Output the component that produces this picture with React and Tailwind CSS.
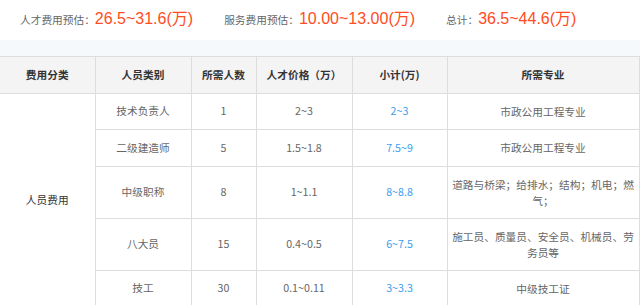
import React from "react"

const font = { fontFamily: '"Noto Sans CJK SC", "Liberation Sans", sans-serif' }
const numFont = { fontFamily: '"Liberation Sans", "Noto Sans CJK SC", sans-serif' }

const rows = [
  { role: "技术负责人", count: "1", price: "2~3", total: "2~3", major: ["市政公用工程专业"], h: "h-[36px]" },
  { role: "二级建造师", count: "5", price: "1.5~1.8", total: "7.5~9", major: ["市政公用工程专业"], h: "h-[37px]" },
  { role: "中级职称", count: "8", price: "1~1.1", total: "8~8.8", major: ["道路与桥梁；给排水；结构；机电；燃", "气；"], h: "h-[52px]" },
  { role: "八大员", count: "15", price: "0.4~0.5", total: "6~7.5", major: ["施工员、质量员、安全员、机械员、劳", "务员等"], h: "h-[52px]" },
  { role: "技工", count: "30", price: "0.1~0.11", total: "3~3.3", major: ["中级技工证"], h: "h-[36px]" },
]

function Summary({ label, value }) {
  return (
    <div className="flex items-baseline">
      <span className="text-[10.7px] text-[#666]">{label}</span>
      <span className="text-[16px] text-[#ff4c22]" style={numFont}>
        {value}
      </span>
    </div>
  )
}

export default function App() {
  return (
    <div className="w-[640px] h-[305px] overflow-hidden bg-white" style={font}>
      {/* estimate line */}
      <div className="h-[40px] flex items-center pl-[20px] pb-[3px] gap-[31px]">
        <Summary label="人才费用预估：" value="26.5~31.6(万)" />
        <Summary label="服务费用预估：" value="10.00~13.00(万)" />
        <Summary label="总计：" value="36.5~44.6(万)" />
      </div>
      <div className="h-[16px] bg-[#f5f9fc]" />

      <table className="w-[639px] table-fixed border-collapse text-center text-[10.7px] text-[#666]">
        <colgroup>
          <col className="w-[95px]" />
          <col className="w-[96px]" />
          <col className="w-[65px]" />
          <col className="w-[96px]" />
          <col className="w-[95px]" />
          <col className="w-[192px]" />
        </colgroup>
        <thead>
          <tr className="h-[37px] bg-[#f4f4f4] text-[#333] font-bold">
            <th className="border-t border-b border-r border-[#ddd]">费用分类</th>
            <th className="border border-[#ddd]">人员类别</th>
            <th className="border border-[#ddd]">所需人数</th>
            <th className="border border-[#ddd]">人才价格（万）</th>
            <th className="border border-[#ddd]">小计(万)</th>
            <th className="border border-[#ddd]">所需专业</th>
          </tr>
        </thead>
        <tbody>
          {rows.map((r, i) => (
            <tr key={i} className={r.h}>
              {i === 0 && (
                <td rowSpan={5} className="border-r border-b border-[#ddd] text-[#333]">
                  人员费用
                </td>
              )}
              <td className="border border-[#ddd]">{r.role}</td>
              <td className="border border-[#ddd]">{r.count}</td>
              <td className="border border-[#ddd]">{r.price}</td>
              <td className="border border-[#ddd] text-[#3ba0ee]">{r.total}</td>
              <td className="border border-[#ddd] leading-[16px] px-0">
                {r.major.map((line, j) => (
                  <div key={j} className="whitespace-nowrap">
                    {line}
                  </div>
                ))}
              </td>
            </tr>
          ))}
        </tbody>
      </table>
    </div>
  )
}
